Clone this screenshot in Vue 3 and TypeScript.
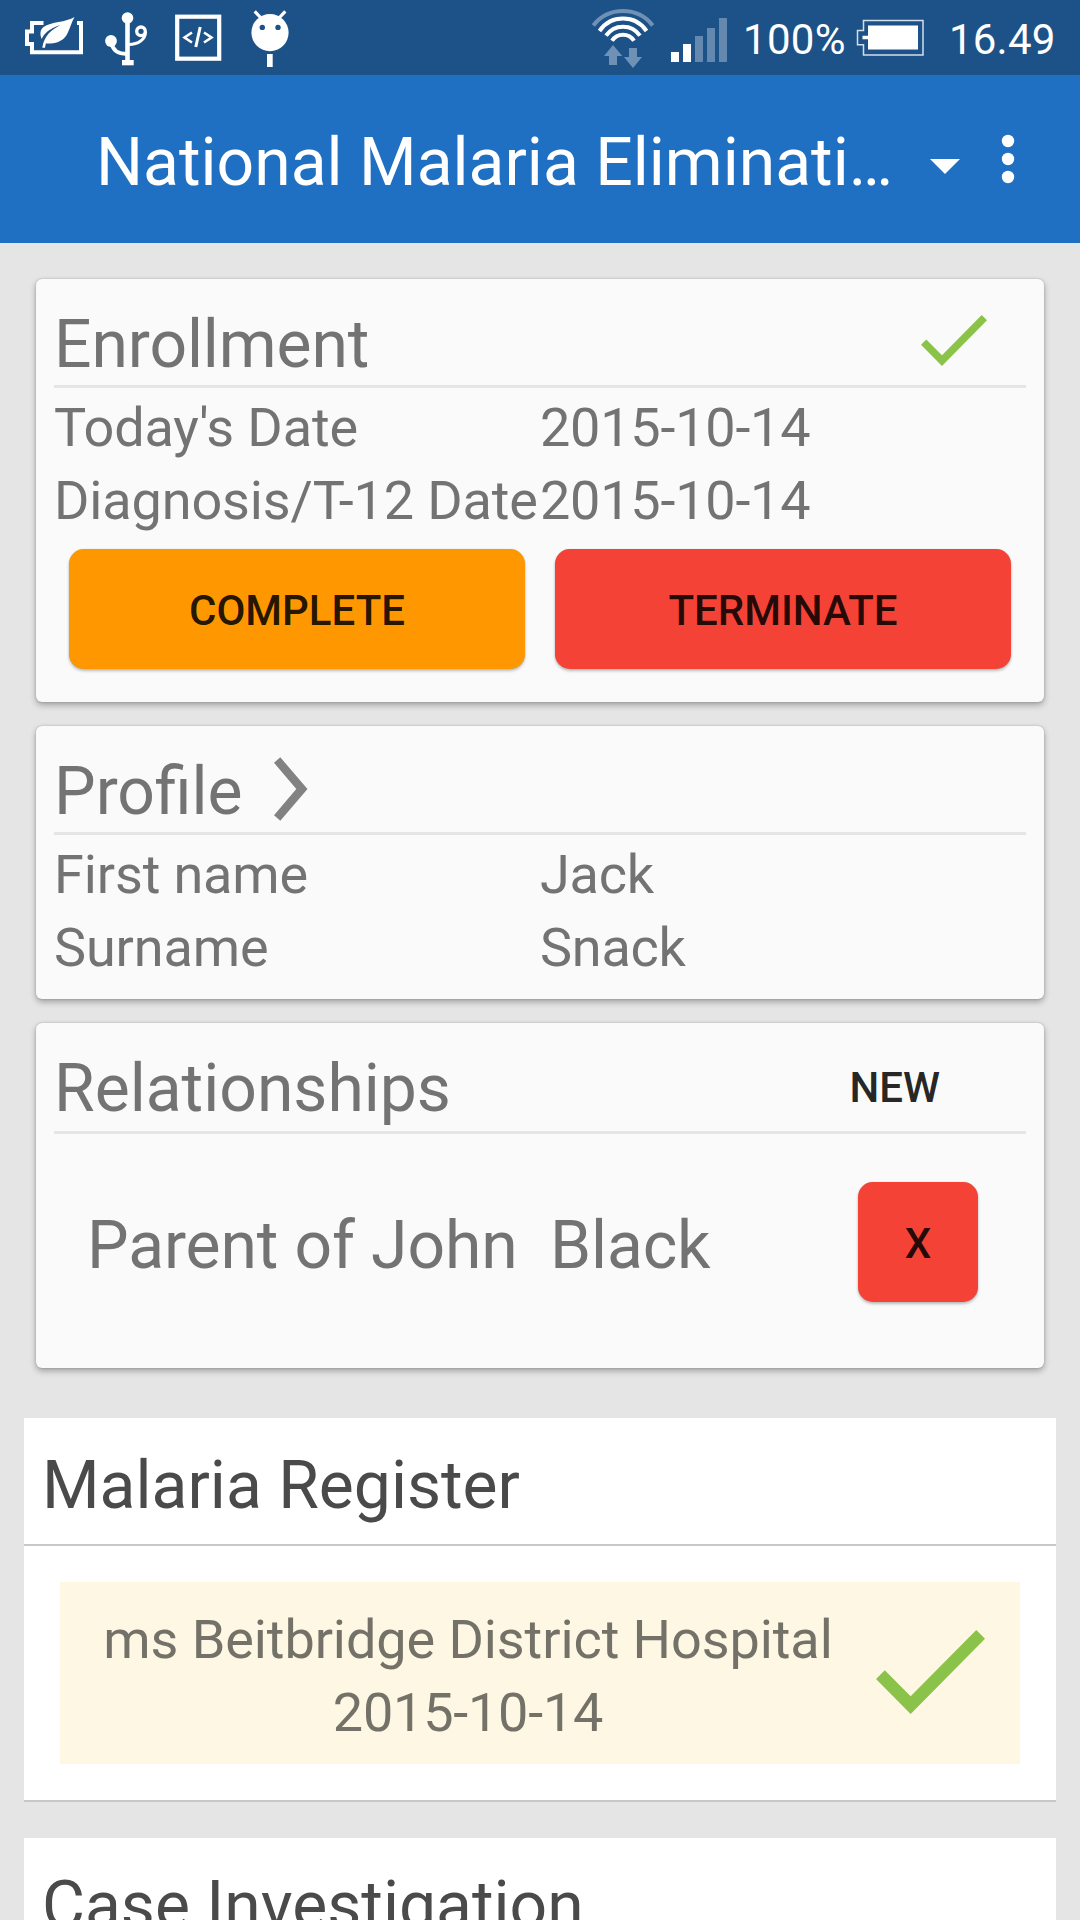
<script setup lang="ts">
interface Field {
  label: string
  value: string
}

const enrollment: Field[] = [
  { label: "Today's Date", value: '2015-10-14' },
  { label: 'Diagnosis/T-12 Date', value: '2015-10-14' },
]

const profile: Field[] = [
  { label: 'First name', value: 'Jack' },
  { label: 'Surname', value: 'Snack' },
]
</script>

<template>
  <div class="screen">
    <header class="status">
      <svg class="i-leaf" width="60" height="40" viewBox="24 16 60 40">
        <path d="M43.5 23H32V31.5H27V44H32V52.3H81V23H77" fill="none" stroke="#fff" stroke-width="4" />
        <path d="M74.6 17C66 22.5 51 21.500 43.500 27C39.800 30 39.800 35 41.800 39C43.500 34.500 48 29 60.500 25C51 30 44 36 42.300 47.700H45L45.800 43.500C54 43.800 61.500 42.500 66.300 35.500C69.500 30.500 71 23 74.600 17Z" fill="#fff" />
      </svg>
      <svg class="i-usb" width="44" height="56" viewBox="104 11 44 56">
        <g fill="none" stroke="#fff">
          <path d="M127.500 18V62" stroke-width="4.600" />
          <path d="M111 42C112.500 50.500 119 54 127 54" stroke-width="3.800" />
          <circle cx="141" cy="31.300" r="4.300" stroke-width="3.300" />
          <path d="M145.500 32C145.500 39.500 138 44.500 129 44.500" stroke-width="3" />
        </g>
        <circle cx="127.500" cy="18" r="5.800" fill="#fff" />
        <circle cx="111" cy="41" r="5.900" fill="#fff" />
        <path d="M122 60H133.700V65.300H122Z" fill="#fff" />
      </svg>
      <svg class="i-code" width="48" height="48" viewBox="174 14 48 48">
        <g fill="none" stroke="#fff">
          <rect x="177.200" y="16.700" width="42" height="42" stroke-width="4.200" />
          <path d="M192 32.500L184.500 37.500L192 42.500M204 32.500L211.500 37.500L204 42.500" stroke-width="2.600" />
          <path d="M200.200 27L195.800 47" stroke-width="3" />
        </g>
      </svg>
      <svg class="i-bot" width="40" height="58" viewBox="250 10 40 58">
        <path d="M254.700 11.300L261 18M285.300 11.300L279 18" stroke="#fff" stroke-width="3.200" />
        <circle cx="270" cy="32.600" r="18.600" fill="#fff" />
        <circle cx="262.300" cy="27.400" r="2.700" fill="#1d5288" />
        <circle cx="278" cy="27.400" r="2.700" fill="#1d5288" />
        <path d="M267 54H272.700V67H267Z" fill="#fff" />
      </svg>
      <svg class="i-wifi" width="64" height="62" viewBox="591 7 64 62">
        <g fill="none" stroke="#fff" stroke-width="4">
          <path d="M593.300 25.500A37.800 37.800 0 0 1 652.700 25.500" stroke="#6f91b5" />
          <path d="M599.500 31A28.500 28.500 0 0 1 646.500 31" />
          <path d="M606 35.700A20.500 20.500 0 0 1 640 35.700" />
          <path d="M612 40.800A13 13 0 0 1 634 40.800" />
        </g>
        <path d="M604 56L613 45L622.300 56H617V65H609V56ZM629 48H637V57H642L633 68L624 57H629Z" fill="#6f91b5" />
      </svg>
      <svg class="i-signal" width="56" height="44" viewBox="671 18 56 44">
        <path d="M671 52h8v10h-8zM683 44h8v18h-8z" fill="#fff" />
        <path d="M695 36h8v26h-8zM707 28h8v34h-8zM719 18h8v44h-8z" fill="#6488ae" />
      </svg>
      <span class="percent">100%</span>
      <svg class="i-battery" width="68" height="38" viewBox="856 19 68 38">
        <path d="M863.500 20.500H923V55H863.500V44.700H857.500V30.500H863.500Z" fill="none" stroke="#d3deea" stroke-width="1.500" />
        <path d="M868 25.500H918V49.500H868V39.300H862.500V35.700H868Z" fill="#fff" />
      </svg>
      <span class="clock">16.49</span>
    </header>

    <nav class="appbar">
      <span class="apptitle">National Malaria Eliminati…</span>
      <svg class="caret" width="30" height="15" viewBox="0 0 30 15"><path d="M0 0H30L15 15Z" fill="#fff" /></svg>
      <svg class="more" width="14" height="50" viewBox="0 0 14 50">
        <circle cx="7" cy="7" r="6.200" fill="#fff" />
        <circle cx="7" cy="25" r="6.200" fill="#fff" />
        <circle cx="7" cy="43" r="6.200" fill="#fff" />
      </svg>
    </nav>

    <main>
      <section class="card enroll">
        <div class="head">
          <h2>Enrollment</h2>
          <svg class="check-sm" width="66" height="51" viewBox="3.410 5.590 17.590 13.410" preserveAspectRatio="none">
            <path d="M9 16.170L4.830 12L3.410 13.410L9 19L21 7L19.590 5.590Z" fill="#8bc34a" />
          </svg>
        </div>
        <div class="fields">
          <div v-for="f in enrollment" :key="f.label" class="field">
            <span class="label">{{ f.label }}</span><span class="value">{{ f.value }}</span>
          </div>
        </div>
        <div class="actions">
          <button class="btn orange">COMPLETE</button>
          <button class="btn red">TERMINATE</button>
        </div>
      </section>

      <section class="card person">
        <div class="head">
          <h2>Profile</h2>
          <svg class="chevron" width="34" height="64" viewBox="0 0 34 64">
            <path d="M0 5.700L6.300 0.300L33.500 32L6.300 63.700L0 58.300L22.300 32Z" fill="#828282" />
          </svg>
        </div>
        <div class="fields">
          <div v-for="f in profile" :key="f.label" class="field">
            <span class="label">{{ f.label }}</span><span class="value">{{ f.value }}</span>
          </div>
        </div>
      </section>

      <section class="card relations">
        <div class="head tall">
          <h2>Relationships</h2>
          <button class="new">NEW</button>
        </div>
        <div class="relation">
          <span class="who">Parent of John&nbsp; Black</span>
          <button class="btn red remove">X</button>
        </div>
      </section>

      <section class="stage">
        <h3>Malaria Register</h3>
        <div class="events">
          <div class="event">
            <div class="info">
              <span class="place">ms Beitbridge District Hospital</span>
              <span class="value">2015-10-14</span>
            </div>
            <svg class="check-lg" width="109" height="84" viewBox="3.410 5.590 17.590 13.410" preserveAspectRatio="none">
              <path d="M9 16.170L4.830 12L3.410 13.410L9 19L21 7L19.590 5.590Z" fill="#8bc34a" />
            </svg>
          </div>
        </div>
      </section>

      <section class="stage">
        <h3>Case Investigation</h3>
      </section>
    </main>
  </div>
</template>

<style>
body {
  margin: 0;
  overflow: hidden;
}
</style>

<style scoped>
.screen {
  width: 1080px;
  height: 1920px;
  overflow: hidden;
  background: #e5e5e5;
  font-family: Roboto, "Liberation Sans", sans-serif;
  color: #737373;
}
svg {
  display: block;
  flex: none;
}
.status {
  display: flex;
  align-items: flex-start;
  height: 75px;
  background: #1d5288;
  color: #fff;
  font-size: 42px;
  line-height: 50px;
  white-space: nowrap;
}
.i-leaf { margin: 16px 0 0 24px; }
.i-usb { margin: 11px 0 0 20px; }
.i-code { margin: 14px 0 0 26px; }
.i-bot { margin: 10px 0 0 28px; }
.i-wifi { margin: 7px 0 0 301px; }
.i-signal { margin: 18px 0 0 16px; }
.percent {
  width: 113px;
  margin: 15px 0 0 16px;
  letter-spacing: 0.3px;
}
.i-battery { margin: 19px 0 0 0; }
.clock {
  margin: 15px 0 0 25px;
  letter-spacing: 0.2px;
}

.appbar {
  display: flex;
  align-items: flex-start;
  height: 168px;
  background: #1f70c2;
  color: #fff;
}
.apptitle {
  width: 800px;
  margin: 49px 0 0 96px;
  font-size: 66px;
  line-height: 78px;
  white-space: nowrap;
}
.caret { margin: 84px 0 0 34px; }
.more { margin: 59px 0 0 41px; }

main {
  display: flex;
  flex-direction: column;
  padding: 36px 24px 0;
}
.card {
  margin: 0 12px 24px;
  padding: 0 18px;
  border-radius: 6px;
  background: #fafafa;
  box-shadow: 0 3px 6px rgba(0, 0, 0, 0.3), 0 0 2px rgba(0, 0, 0, 0.22);
}
.head {
  display: flex;
  align-items: flex-start;
  height: 106px;
  border-bottom: 3px solid #e5e5e5;
}
.tall { height: 108px; }
h2, h3 {
  margin: 0;
  font-size: 66px;
  font-weight: 400;
  line-height: 78px;
  white-space: nowrap;
}
h2 { margin-top: 27px; }
.enroll h2 { letter-spacing: -0.1px; }
.check-sm { margin: 36px 39px 0 auto; }
.chevron { margin: 31px 0 0 31px; }
.fields { padding-top: 3px; }
.field {
  display: grid;
  grid-template-columns: 486px 1fr;
  font-size: 54px;
  line-height: 73px;
  white-space: nowrap;
}
.label { letter-spacing: -0.13px; }
.value { letter-spacing: -0.23px; }
.place { letter-spacing: -0.08px; }
.actions {
  display: grid;
  grid-template-columns: 1fr 1fr;
  gap: 30px;
  padding: 12px 15px 33px;
}
button {
  padding: 0;
  border: 0;
  background: none;
  font: 500 42px/50px Roboto, "Liberation Sans", sans-serif;
  color: rgba(0, 0, 0, 0.87);
}
.btn {
  height: 120px;
  padding-top: 4px;
  border-radius: 15px;
  box-shadow: 0 2px 3px rgba(0, 0, 0, 0.25), 0 0 1px rgba(0, 0, 0, 0.2);
}
.orange { background: #ff9800; }
.red { background: #f44336; }
.person { padding-bottom: 15px; }
.new { margin: 40px 86px 0 auto; }
.relations { margin-bottom: 50px; }
.relation {
  display: flex;
  align-items: flex-start;
  justify-content: space-between;
  padding: 48px 48px 66px 33px;
}
.who {
  margin-top: 25px;
  font-size: 66px;
  line-height: 78px;
  letter-spacing: -0.12px;
  white-space: nowrap;
}
.remove { width: 120px; }
.stage {
  margin-bottom: 36px;
  border-bottom: 2px solid #c8c8c8;
  background: #fff;
}
h3 {
  height: 97px;
  padding: 29px 0 0 18px;
  border-bottom: 2px solid #c8c8c8;
  color: #4a4a4a;
}
.events { padding: 36px; }
.event {
  display: flex;
  align-items: center;
  height: 182px;
  padding-right: 35px;
  background: #fdf7e3;
}
.info {
  display: flex;
  flex: 1;
  flex-direction: column;
  align-items: center;
  padding-top: 6px;
  color: #747268;
  font-size: 54px;
  line-height: 73px;
  white-space: nowrap;
}
.check-lg { margin-bottom: 3px; }
</style>
